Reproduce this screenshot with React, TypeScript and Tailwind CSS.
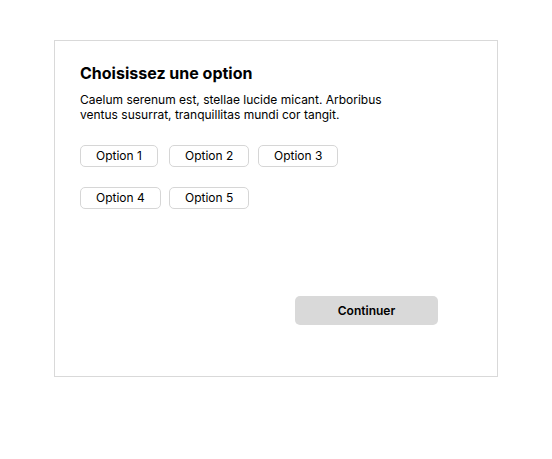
import React, { useState } from 'react';

const options = ['Option 1', 'Option 2', 'Option 3', 'Option 4', 'Option 5'];

export default function App() {
  const [selected, setSelected] = useState<string | null>(null);

  return (
    <div className="min-h-screen bg-white pt-[40px] font-['Inter','Liberation_Sans',sans-serif] text-black">
      <div className="mx-auto flex h-[337px] w-[444px] flex-col border border-[#d9d9d9] px-[25px] pt-[20px]">
        <h1 className="text-[16px] leading-[24px] font-bold">Choisissez une option</h1>
        <p className="mt-[7px] max-w-[310px] text-[12px] leading-[15px]">
          Caelum serenum est, stellae lucide micant. Arboribus ventus susurrat, tranquillitas mundi cor tangit.
        </p>

        {/* Options grid */}
        <div className="mt-[23px] grid grid-cols-[repeat(3,80px)] gap-x-[9px] gap-y-[20px]">
          {options.map((opt) => (
            <button
              key={opt}
              onClick={() => setSelected(opt)}
              className={`h-[22px] justify-self-start whitespace-nowrap rounded-[5px] border px-[15px] text-[12px] leading-none ${
                selected === opt ? 'border-[#999] bg-[#f3f3f3]' : 'border-[#d6d6d6] bg-white'
              }`}
            >
              {opt}
            </button>
          ))}
        </div>

        <div className="mt-[87px] flex justify-end pr-[34px]">
          <button className="h-[29px] w-[143px] rounded-[5px] bg-[#d9d9d9] text-[12px] font-semibold">
            Continuer
          </button>
        </div>
      </div>
    </div>
  );
}
